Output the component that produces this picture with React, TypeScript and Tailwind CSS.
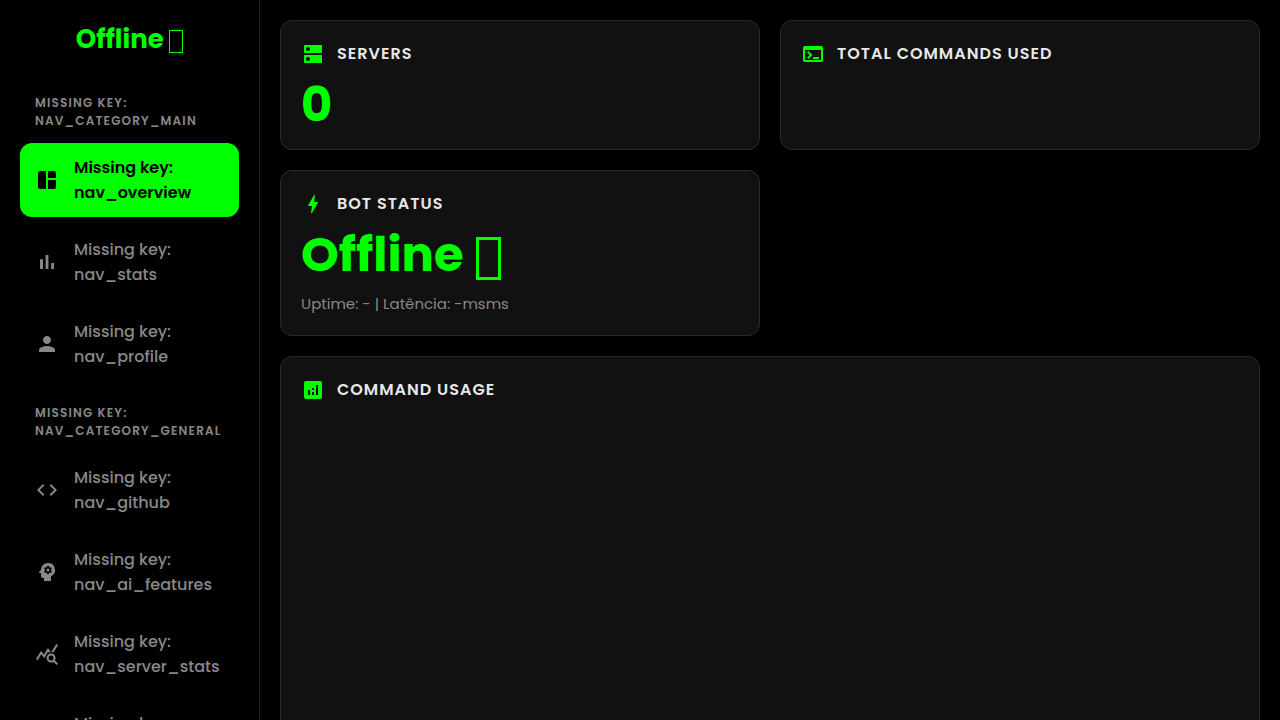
import type { ReactNode } from "react";
import type { IconType } from "react-icons";
import {
  MdAnalytics,
  MdBolt,
  MdCode,
  MdDns,
  MdPerson,
  MdPsychology,
  MdQueryStats,
  MdSettings,
  MdSpaceDashboard,
  MdTerminal,
} from "react-icons/md";

function BarsIcon({ className }: { className?: string }) {
  return (
    <svg viewBox="0 0 24 24" fill="currentColor" aria-hidden="true" className={className}>
      <path d="M5 9.2h3V19H5zM10.6 5h2.8v14h-2.8zm5.6 8H19v6h-2.8z" />
    </svg>
  );
}

type NavIcon = IconType | typeof BarsIcon;
type NavEntry = { label: string; icon: NavIcon; active?: boolean };

const sections: { title: string; items: NavEntry[] }[] = [
  {
    title: "nav_category_main",
    items: [
      { label: "nav_overview", icon: MdSpaceDashboard, active: true },
      { label: "nav_stats", icon: BarsIcon },
      { label: "nav_profile", icon: MdPerson },
    ],
  },
  {
    title: "nav_category_general",
    items: [
      { label: "nav_github", icon: MdCode },
      { label: "nav_ai_features", icon: MdPsychology },
      { label: "nav_server_stats", icon: MdQueryStats },
      { label: "nav_settings", icon: MdSettings },
    ],
  },
];

function NavLink({ label, icon: Icon, active }: NavEntry) {
  return (
    <a
      href={`#${label}`}
      aria-current={active ? "page" : undefined}
      className={`flex items-center gap-[15px] rounded-xl px-[15px] py-3 text-base leading-[25px] ${
        active ? "bg-[#00ff00] font-semibold text-black" : "font-medium text-[#888888]"
      }`}
    >
      <Icon className="size-6 shrink-0" />
      <span>
        Missing key:
        <br />
        {label}
      </span>
    </a>
  );
}

function Card({
  title,
  icon: Icon,
  className = "",
  children,
}: {
  title: string;
  icon: IconType;
  className?: string;
  children?: ReactNode;
}) {
  return (
    <section className={`rounded-xl border border-[#2a2a2a] bg-[#111111] p-5 ${className}`}>
      <h2 className="flex items-center gap-3 text-base leading-[26px] font-semibold tracking-[1px] text-[#e8e8e8] uppercase">
        <Icon className="size-6 shrink-0 text-[#00ff00]" />
        {title}
      </h2>
      {children}
    </section>
  );
}

export default function App() {
  return (
    <div className="flex h-screen overflow-hidden bg-black font-[Poppins,Inter,sans-serif]">
      <aside className="w-[260px] shrink-0 overflow-hidden border-r border-[#1f1f1f] p-5">
        <div className="text-center text-[26px] leading-[39px] font-bold text-[#00ff00]">
          Offline{" "}
          <span className="-mb-[5px] inline-block h-[23px] w-[14px] border border-current" />
        </div>
        <nav className="mt-[35px] flex flex-col gap-[23px]">
          {sections.map((section) => (
            <div key={section.title}>
              <h3 className="px-[15px] text-xs leading-[18px] font-semibold tracking-widest text-[#888888] uppercase">
                Missing key:
                <br />
                {section.title}
              </h3>
              <div className="mt-[13px] flex flex-col gap-2">
                {section.items.map((item) => (
                  <NavLink key={item.label} {...item} />
                ))}
              </div>
            </div>
          ))}
        </nav>
      </aside>
      <main className="min-w-0 flex-1 overflow-hidden p-5">
        <div className="grid grid-cols-2 gap-5">
          <Card title="Servers" icon={MdDns}>
            <p className="mt-[14px] text-5xl leading-[48px] font-bold text-[#00ff00]">0</p>
          </Card>
          <Card title="Total Commands Used" icon={MdTerminal} />
          <Card title="Bot Status" icon={MdBolt}>
            <p className="mt-[14px] text-5xl leading-[48px] font-bold text-[#00ff00]">
              Offline{" "}
              <span className="-mb-[9px] ml-0.5 inline-block h-[43px] w-[25px] border-[3px] border-current" />
            </p>
            <p className="mt-[14px] text-[15px] leading-[22px] text-[#888888]">
              Uptime: - | Latência: -msms
            </p>
          </Card>
          <Card title="Command Usage" icon={MdAnalytics} className="col-span-2 min-h-[440px]" />
        </div>
      </main>
    </div>
  );
}
